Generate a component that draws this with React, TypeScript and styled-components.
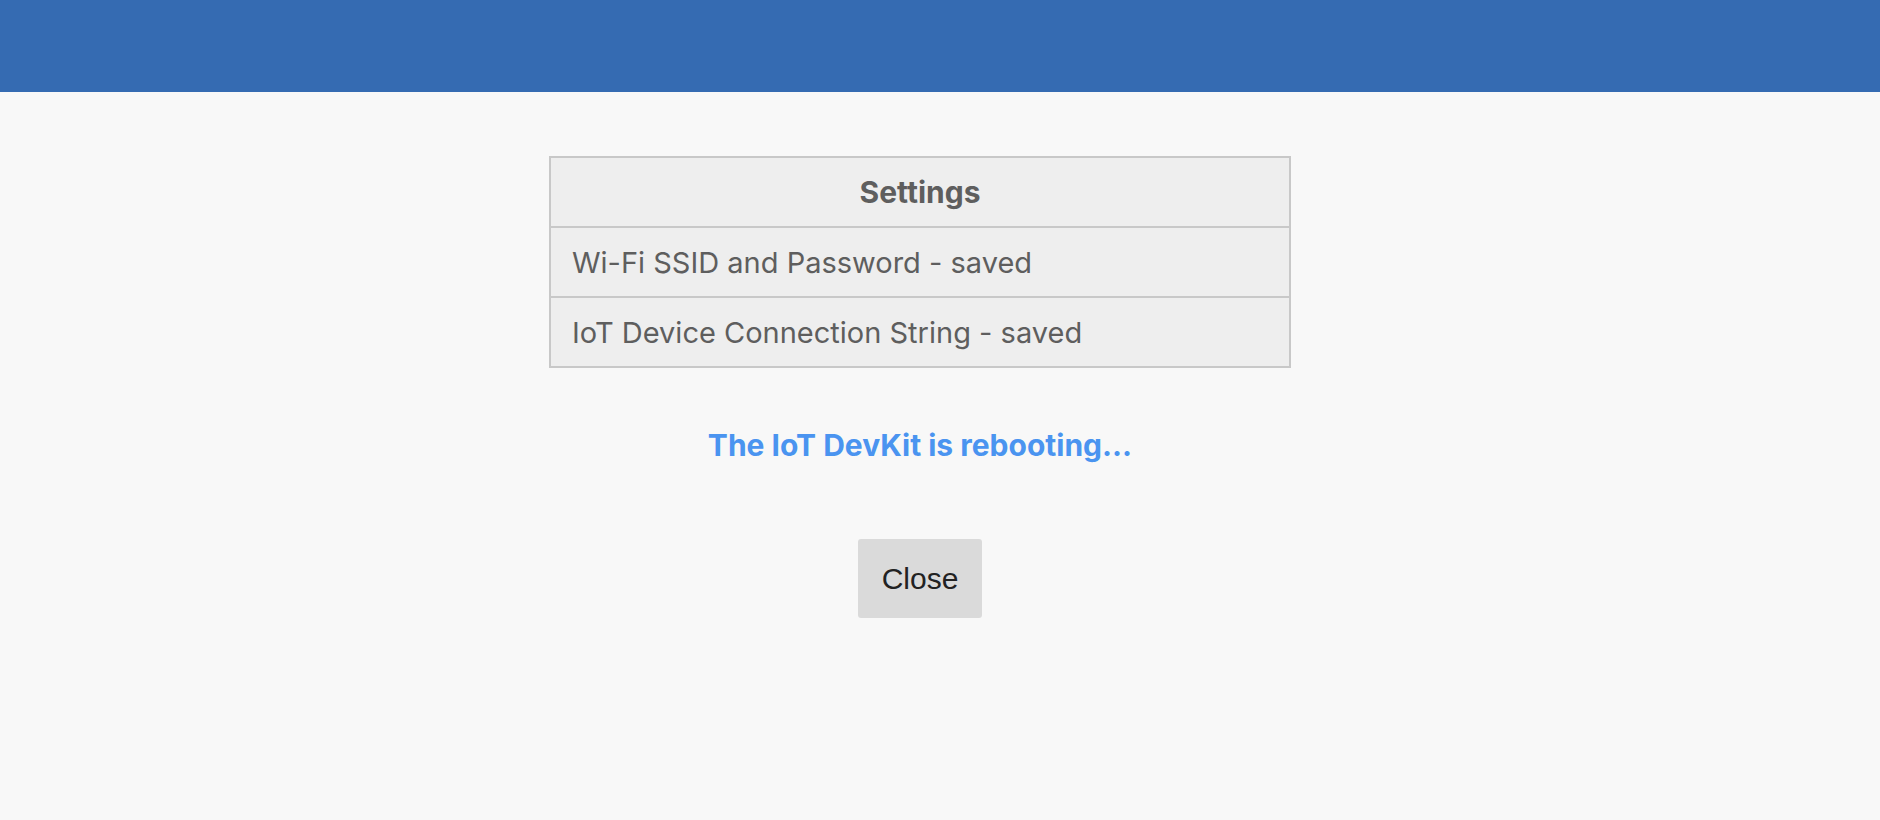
import styled, { createGlobalStyle } from 'styled-components';

const GlobalStyle = createGlobalStyle`
  html, body {
    margin: 0;
    padding: 0;
    background: #f8f8f8;
    font-family: Inter, "Noto Sans", sans-serif;
  }
`;

const rows = [
  'Wi-Fi SSID and Password - saved',
  'IoT Device Connection String - saved',
];

const App = () => {
  return (
    <>
      <GlobalStyle />
      <Page>
        <TopBar />
        <Content>
          <SettingsTable>
            <thead>
              <tr>
                <HeadCell>Settings</HeadCell>
              </tr>
            </thead>
            <tbody>
              {rows.map((r) => (
                <tr key={r}>
                  <Cell>{r}</Cell>
                </tr>
              ))}
            </tbody>
          </SettingsTable>
          <Status>The IoT DevKit is rebooting...</Status>
          <CloseButton type="button">Close</CloseButton>
        </Content>
      </Page>
    </>
  );
};

const Page = styled.div`
  min-height: 820px;
  background: #f8f8f8;
`;

const TopBar = styled.header`
  height: 92px;
  background: #356bb2;
`;

const Content = styled.main`
  display: flex;
  flex-direction: column;
  align-items: center;
  padding: 64px 40px 0 0;
`;

const SettingsTable = styled.table`
  width: 742px;
  border-collapse: collapse;
  background: #eeeeee;
  border: 2px solid #c8c8c8;
  color: #5e5e5e;
  font-size: 29px;
`;

const HeadCell = styled.th`
  height: 68px;
  padding: 0 22px;
  font-size: 30px;
  font-weight: 700;
  text-align: center;
  border-bottom: 2px solid #c8c8c8;
`;

const Cell = styled.td`
  height: 68px;
  padding: 0 22px 0 21px;
  text-align: left;
  border-bottom: 2px solid #c8c8c8;
`;

const Status = styled.p`
  margin: 59px 0 0;
  color: #4a94f0;
  font-size: 30px;
  font-weight: 700;
  line-height: 36px;
`;

const CloseButton = styled.button`
  margin-top: 76px;
  width: 124px;
  height: 79px;
  border: none;
  border-radius: 3px;
  background: #dadada;
  color: #222;
  font-family: "Liberation Sans", Arial, sans-serif;
  font-size: 30px;
`;

export default App;
